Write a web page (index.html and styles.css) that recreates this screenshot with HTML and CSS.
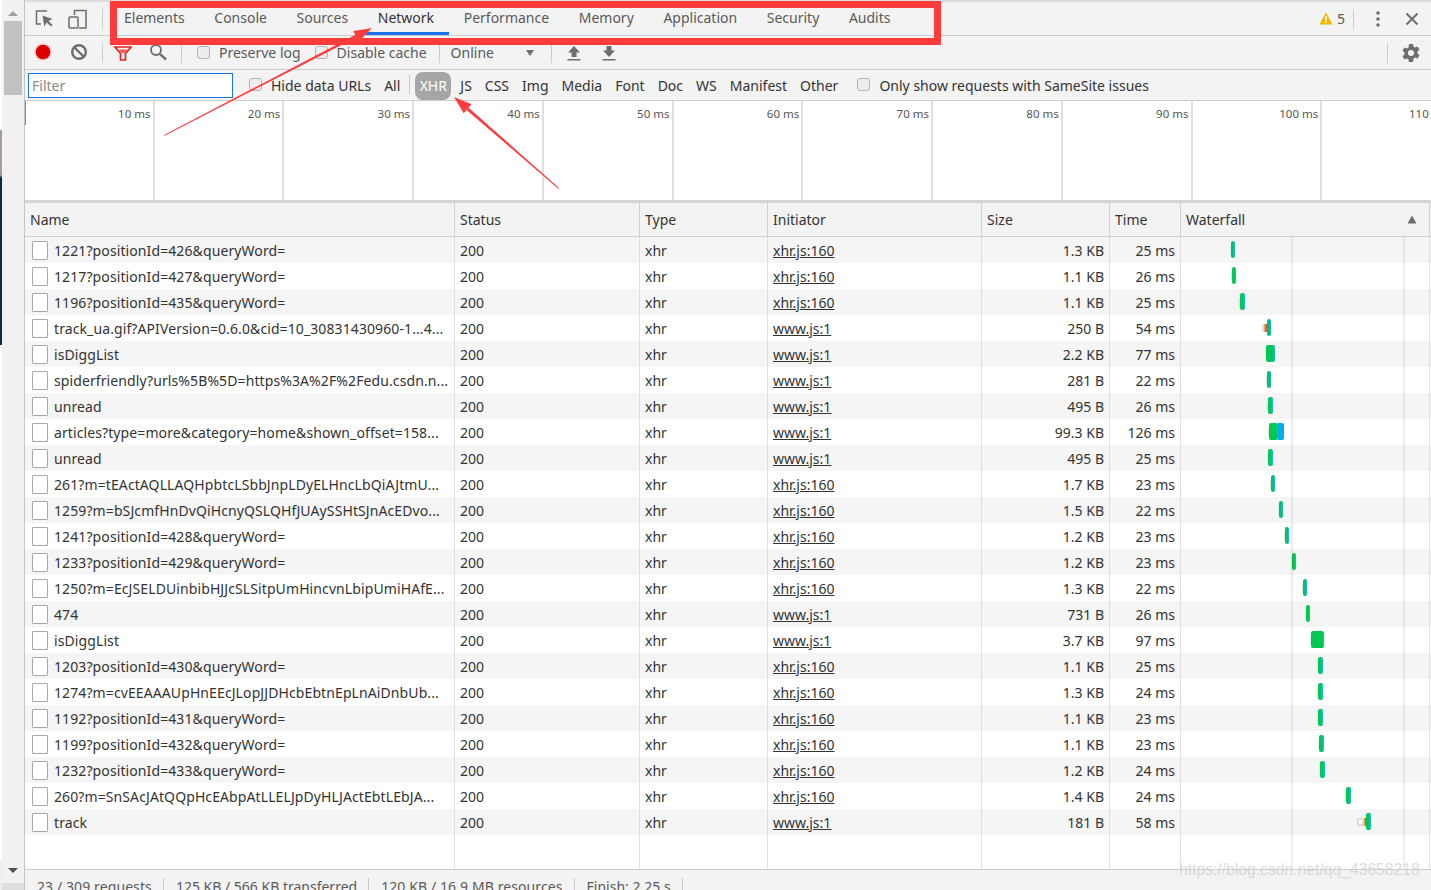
FILE: index.html
```html
<!DOCTYPE html>
<html lang="en">
<head>
<meta charset="utf-8">
<title>DevTools Network</title>
<link rel="stylesheet" href="styles.css">
</head>
<body>
<div class="app">
  <div class="edge"></div>
  <div class="scrollbar">
    <svg class="sb-arrow" width="12" height="8" viewBox="0 0 12 8"><path d="M1 7L6 2l5 5z" fill="#a0a0a0"/></svg>
    <div class="sb-thumb"></div>
    <div class="sb-spacer"></div>
    <svg class="sb-arrow down" width="12" height="8" viewBox="0 0 12 8"><path d="M1 1h10L6 6z" fill="#505050"/></svg>
    <div class="sb-foot"></div>
  </div>
  <div class="main">
    <div class="topline"></div>
    <div class="tabbar">
      <div class="tabicons">
        <svg width="22" height="22" viewBox="0 0 22 22" fill="none"><path d="M14 3H3.500V16H8" stroke="#6e6e6e" stroke-width="1.500"/><path d="M9.500 7.500l1.800 11 2.400-4 4.300 4 1.500-1.500-4-4 4-2z" fill="#6e6e6e"/></svg>
        <svg width="22" height="22" viewBox="0 0 22 22" fill="none"><path d="M7.500 7V2.500H19V20H12" stroke="#6e6e6e" stroke-width="1.500"/><rect x="2" y="9" width="9" height="11" rx="1" stroke="#6e6e6e" stroke-width="1.500"/></svg>
      </div>
      <div class="vsep tall"></div>
      <div class="tabs">
        <span class="tab">Elements</span>
        <span class="tab">Console</span>
        <span class="tab">Sources</span>
        <span class="tab active">Network</span>
        <span class="tab">Performance</span>
        <span class="tab">Memory</span>
        <span class="tab">Application</span>
        <span class="tab">Security</span>
        <span class="tab">Audits</span>
      </div>
      <div class="tabright">
        <svg width="14" height="13" viewBox="0 0 14 13"><path d="M7 0.500L13.600 12.500H0.400z" fill="#f4b400"/><rect x="6.200" y="4" width="1.600" height="4.500" fill="#fff"/><rect x="6.200" y="9.400" width="1.600" height="1.600" fill="#fff"/></svg>
        <span class="warncount">5</span>
        <div class="vsep warn-sep"></div>
        <svg class="more" width="6" height="18" viewBox="0 0 6 18"><circle cx="3" cy="3" r="1.800" fill="#6e6e6e"/><circle cx="3" cy="9" r="1.800" fill="#6e6e6e"/><circle cx="3" cy="15" r="1.800" fill="#6e6e6e"/></svg>
        <svg class="close" width="14" height="14" viewBox="0 0 14 14"><path d="M1.500 1.500l11 11M12.500 1.500l-11 11" stroke="#6e6e6e" stroke-width="2"/></svg>
      </div>
    </div>
    <div class="toolbar">
      <svg class="tool-record" width="18" height="18" viewBox="0 0 18 18"><circle cx="9" cy="9" r="9" fill="#f6d0d0"/><circle cx="9" cy="9" r="7.300" fill="#dd0000"/></svg>
      <svg class="tool-clear" width="18" height="18" viewBox="0 0 18 18" fill="none"><circle cx="9" cy="9" r="6.800" stroke="#6e6e6e" stroke-width="2.400"/><path d="M4.500 4.500l9 9" stroke="#6e6e6e" stroke-width="2.400"/></svg>
      <div class="vsep short"></div>
      <svg class="tool-filter" width="18" height="15" viewBox="0 0 18 15" fill="none"><path d="M1 1h16l-5.500 6.500V14h-5V7.500z" stroke="#e8201f" stroke-width="1.700"/><path d="M4.500 3.500h9L10.500 7h-3z" fill="#f25a5a"/></svg>
      <svg class="tool-search" width="18" height="18" viewBox="0 0 18 18" fill="none"><circle cx="7" cy="7" r="5" stroke="#6e6e6e" stroke-width="1.800"/><path d="M10.800 10.800L17 16.500" stroke="#6e6e6e" stroke-width="2.400"/></svg>
      <div class="vsep short"></div>
      <label class="check preserve"><span class="box"></span>Preserve log</label>
      <label class="check disable"><span class="box"></span>Disable cache</label>
      <div class="vsep short"></div>
      <span class="online">Online</span>
      <svg class="online-arrow" width="10" height="8" viewBox="0 0 10 8"><path d="M1 1h8L5 7z" fill="#6e6e6e"/></svg>
      <div class="vsep short"></div>
      <svg class="tool-up" width="14" height="16" viewBox="0 0 14 16"><path d="M7 1l6 6.500H9.500V12h-5V7.500H1z" fill="#6e6e6e"/><rect x="0.500" y="14" width="13" height="1.500" fill="#6e6e6e"/></svg>
      <svg class="tool-down" width="14" height="16" viewBox="0 0 14 16"><path d="M7 12L1 5.500h3.500V1h5v4.500H13z" fill="#6e6e6e"/><rect x="0.500" y="14" width="13" height="1.500" fill="#6e6e6e"/></svg>
      <div class="grow"></div>
      <div class="vsep short"></div>
      <svg class="tool-gear" width="20" height="20" viewBox="0 0 20 20"><path fill="#6e6e6e" fill-rule="evenodd" d="M8 1h4l.5 2.600 1.500.8 2.500-1 2 3.400-2 1.700v2l2 1.700-2 3.400-2.500-1-1.500.8L12 19H8l-.5-2.600-1.500-.8-2.500 1-2-3.400 2-1.700V9.500l-2-1.700 2-3.400 2.500 1 1.500-.8zM10 7a3 3 0 1 0 0 6 3 3 0 0 0 0-6z"/></svg>
    </div>
    <div class="filterbar">
      <div class="filterinput">Filter</div>
      <label class="check hide"><span class="box"></span>Hide data URLs</label>
      <span class="ftype all">All</span>
      <div class="vsep filter-sep"></div>
      <span class="ftype selected">XHR</span>
      <span class="ftype">JS</span>
      <span class="ftype">CSS</span>
      <span class="ftype">Img</span>
      <span class="ftype">Media</span>
      <span class="ftype">Font</span>
      <span class="ftype">Doc</span>
      <span class="ftype">WS</span>
      <span class="ftype">Manifest</span>
      <span class="ftype">Other</span>
      <label class="check samesite"><span class="box"></span>Only show requests with SameSite issues</label>
    </div>
    <div class="overview">
      <div class="tick">10 ms</div>
      <div class="tick">20 ms</div>
      <div class="tick">30 ms</div>
      <div class="tick">40 ms</div>
      <div class="tick">50 ms</div>
      <div class="tick">60 ms</div>
      <div class="tick">70 ms</div>
      <div class="tick">80 ms</div>
      <div class="tick">90 ms</div>
      <div class="tick">100 ms</div>
      <div class="tick">110 ms</div>
    </div>
    <div class="thead row-grid">
      <div class="th">Name</div>
      <div class="th">Status</div>
      <div class="th">Type</div>
      <div class="th">Initiator</div>
      <div class="th">Size</div>
      <div class="th">Time</div>
      <div class="th wf-head">Waterfall<svg width="10" height="9" viewBox="0 0 10 9"><path d="M5 0.500L9.500 8.500H0.500z" fill="#6e6e6e"/></svg></div>
    </div>
    <div class="tbody">
      <div class="row row-grid"><div class="td name"><span class="file"></span><span class="fname">1221?positionId=426&amp;queryWord=</span></div><div class="td">200</div><div class="td">xhr</div><div class="td"><a class="link">xhr.js:160</a></div><div class="td num">1.3 KB</div><div class="td num">25 ms</div><div class="td wf"><span class="wait" style="margin-left:49px;width:1px"></span><span class="recv" style="width:4px"></span></div></div>
      <div class="row row-grid"><div class="td name"><span class="file"></span><span class="fname">1217?positionId=427&amp;queryWord=</span></div><div class="td">200</div><div class="td">xhr</div><div class="td"><a class="link">xhr.js:160</a></div><div class="td num">1.1 KB</div><div class="td num">26 ms</div><div class="td wf"><span class="wait" style="margin-left:50px;width:1px"></span><span class="recv" style="width:4px"></span></div></div>
      <div class="row row-grid"><div class="td name"><span class="file"></span><span class="fname">1196?positionId=435&amp;queryWord=</span></div><div class="td">200</div><div class="td">xhr</div><div class="td"><a class="link">xhr.js:160</a></div><div class="td num">1.1 KB</div><div class="td num">25 ms</div><div class="td wf"><span class="wait" style="margin-left:57px;width:2px"></span><span class="recv" style="width:5px"></span></div></div>
      <div class="row row-grid"><div class="td name"><span class="file"></span><span class="fname">track_ua.gif?APIVersion=0.6.0&amp;cid=10_30831430960-1...4...</span></div><div class="td">200</div><div class="td">xhr</div><div class="td"><a class="link">www.js:1</a></div><div class="td num">250 B</div><div class="td num">54 ms</div><div class="td wf"><span class="wait" style="margin-left:81px;width:2px"></span><span class="stall" style="width:3px"></span><span class="recv" style="width:4px"></span></div></div>
      <div class="row row-grid"><div class="td name"><span class="file"></span><span class="fname">isDiggList</span></div><div class="td">200</div><div class="td">xhr</div><div class="td"><a class="link">www.js:1</a></div><div class="td num">2.2 KB</div><div class="td num">77 ms</div><div class="td wf"><span class="wait" style="margin-left:84px;width:1px"></span><span class="recv wide" style="width:9px"></span></div></div>
      <div class="row row-grid"><div class="td name"><span class="file"></span><span class="fname">spiderfriendly?urls%5B%5D=https%3A%2F%2Fedu.csdn.n...</span></div><div class="td">200</div><div class="td">xhr</div><div class="td"><a class="link">www.js:1</a></div><div class="td num">281 B</div><div class="td num">22 ms</div><div class="td wf"><span class="wait" style="margin-left:85px;width:1px"></span><span class="recv" style="width:4px"></span></div></div>
      <div class="row row-grid"><div class="td name"><span class="file"></span><span class="fname">unread</span></div><div class="td">200</div><div class="td">xhr</div><div class="td"><a class="link">www.js:1</a></div><div class="td num">495 B</div><div class="td num">26 ms</div><div class="td wf"><span class="wait" style="margin-left:85px;width:2px"></span><span class="recv" style="width:5px"></span></div></div>
      <div class="row row-grid"><div class="td name"><span class="file"></span><span class="fname">articles?type=more&amp;category=home&amp;shown_offset=158...</span></div><div class="td">200</div><div class="td">xhr</div><div class="td"><a class="link">www.js:1</a></div><div class="td num">99.3 KB</div><div class="td num">126 ms</div><div class="td wf"><span class="wait" style="margin-left:87px;width:1px"></span><span class="recv wide" style="width:9px"></span><span class="dl" style="width:6px"></span></div></div>
      <div class="row row-grid"><div class="td name"><span class="file"></span><span class="fname">unread</span></div><div class="td">200</div><div class="td">xhr</div><div class="td"><a class="link">www.js:1</a></div><div class="td num">495 B</div><div class="td num">25 ms</div><div class="td wf"><span class="wait" style="margin-left:86px;width:1px"></span><span class="recv" style="width:5px"></span></div></div>
      <div class="row row-grid"><div class="td name"><span class="file"></span><span class="fname">261?m=tEActAQLLAQHpbtcLSbbJnpLDyELHncLbQiAJtmU...</span></div><div class="td">200</div><div class="td">xhr</div><div class="td"><a class="link">xhr.js:160</a></div><div class="td num">1.7 KB</div><div class="td num">23 ms</div><div class="td wf"><span class="wait" style="margin-left:89px;width:1px"></span><span class="recv" style="width:4px"></span></div></div>
      <div class="row row-grid"><div class="td name"><span class="file"></span><span class="fname">1259?m=bSJcmfHnDvQiHcnyQSLQHfJUAySSHtSJnAcEDvo...</span></div><div class="td">200</div><div class="td">xhr</div><div class="td"><a class="link">xhr.js:160</a></div><div class="td num">1.5 KB</div><div class="td num">22 ms</div><div class="td wf"><span class="wait" style="margin-left:97px;width:1px"></span><span class="recv" style="width:4px"></span></div></div>
      <div class="row row-grid"><div class="td name"><span class="file"></span><span class="fname">1241?positionId=428&amp;queryWord=</span></div><div class="td">200</div><div class="td">xhr</div><div class="td"><a class="link">xhr.js:160</a></div><div class="td num">1.2 KB</div><div class="td num">23 ms</div><div class="td wf"><span class="wait" style="margin-left:103px;width:1px"></span><span class="recv" style="width:4px"></span></div></div>
      <div class="row row-grid"><div class="td name"><span class="file"></span><span class="fname">1233?positionId=429&amp;queryWord=</span></div><div class="td">200</div><div class="td">xhr</div><div class="td"><a class="link">xhr.js:160</a></div><div class="td num">1.2 KB</div><div class="td num">23 ms</div><div class="td wf"><span class="wait" style="margin-left:110px;width:1px"></span><span class="recv" style="width:4px"></span></div></div>
      <div class="row row-grid"><div class="td name"><span class="file"></span><span class="fname">1250?m=EcJSELDUinbibHJJcSLSitpUmHincvnLbipUmiHAfE...</span></div><div class="td">200</div><div class="td">xhr</div><div class="td"><a class="link">xhr.js:160</a></div><div class="td num">1.3 KB</div><div class="td num">22 ms</div><div class="td wf"><span class="wait" style="margin-left:121px;width:1px"></span><span class="recv" style="width:4px"></span></div></div>
      <div class="row row-grid"><div class="td name"><span class="file"></span><span class="fname">474</span></div><div class="td">200</div><div class="td">xhr</div><div class="td"><a class="link">www.js:1</a></div><div class="td num">731 B</div><div class="td num">26 ms</div><div class="td wf"><span class="wait" style="margin-left:124px;width:1px"></span><span class="recv" style="width:4px"></span></div></div>
      <div class="row row-grid"><div class="td name"><span class="file"></span><span class="fname">isDiggList</span></div><div class="td">200</div><div class="td">xhr</div><div class="td"><a class="link">www.js:1</a></div><div class="td num">3.7 KB</div><div class="td num">97 ms</div><div class="td wf"><span class="wait" style="margin-left:129px;width:1px"></span><span class="recv wide" style="width:13px"></span></div></div>
      <div class="row row-grid"><div class="td name"><span class="file"></span><span class="fname">1203?positionId=430&amp;queryWord=</span></div><div class="td">200</div><div class="td">xhr</div><div class="td"><a class="link">xhr.js:160</a></div><div class="td num">1.1 KB</div><div class="td num">25 ms</div><div class="td wf"><span class="wait" style="margin-left:136px;width:1px"></span><span class="recv" style="width:5px"></span></div></div>
      <div class="row row-grid"><div class="td name"><span class="file"></span><span class="fname">1274?m=cvEEAAAUpHnEEcJLopJJDHcbEbtnEpLnAiDnbUb...</span></div><div class="td">200</div><div class="td">xhr</div><div class="td"><a class="link">xhr.js:160</a></div><div class="td num">1.3 KB</div><div class="td num">24 ms</div><div class="td wf"><span class="wait" style="margin-left:136px;width:1px"></span><span class="recv" style="width:5px"></span></div></div>
      <div class="row row-grid"><div class="td name"><span class="file"></span><span class="fname">1192?positionId=431&amp;queryWord=</span></div><div class="td">200</div><div class="td">xhr</div><div class="td"><a class="link">xhr.js:160</a></div><div class="td num">1.1 KB</div><div class="td num">23 ms</div><div class="td wf"><span class="wait" style="margin-left:136px;width:1px"></span><span class="recv" style="width:5px"></span></div></div>
      <div class="row row-grid"><div class="td name"><span class="file"></span><span class="fname">1199?positionId=432&amp;queryWord=</span></div><div class="td">200</div><div class="td">xhr</div><div class="td"><a class="link">xhr.js:160</a></div><div class="td num">1.1 KB</div><div class="td num">23 ms</div><div class="td wf"><span class="wait" style="margin-left:137px;width:1px"></span><span class="recv" style="width:5px"></span></div></div>
      <div class="row row-grid"><div class="td name"><span class="file"></span><span class="fname">1232?positionId=433&amp;queryWord=</span></div><div class="td">200</div><div class="td">xhr</div><div class="td"><a class="link">xhr.js:160</a></div><div class="td num">1.2 KB</div><div class="td num">24 ms</div><div class="td wf"><span class="wait" style="margin-left:138px;width:1px"></span><span class="recv" style="width:5px"></span></div></div>
      <div class="row row-grid"><div class="td name"><span class="file"></span><span class="fname">260?m=SnSAcJAtQQpHcEAbpAtLLELJpDyHLJActEbtLEbJA...</span></div><div class="td">200</div><div class="td">xhr</div><div class="td"><a class="link">xhr.js:160</a></div><div class="td num">1.4 KB</div><div class="td num">24 ms</div><div class="td wf"><span class="wait" style="margin-left:164px;width:1px"></span><span class="recv" style="width:5px"></span></div></div>
      <div class="row row-grid"><div class="td name"><span class="file"></span><span class="fname">track</span></div><div class="td">200</div><div class="td">xhr</div><div class="td"><a class="link">www.js:1</a></div><div class="td num">181 B</div><div class="td num">58 ms</div><div class="td wf"><span class="queue" style="margin-left:176px;width:7px"></span><span class="stall" style="width:2px"></span><span class="recv" style="width:5px"></span></div></div>
      <div class="row-fill row-grid"><div class="td"></div><div class="td"></div><div class="td"></div><div class="td"></div><div class="td"></div><div class="td"></div><div class="td wf"></div></div>
      <div class="wf-line first"></div>
      <div class="wf-line second"></div>
    </div>
    <div class="statusbar">
      <span class="stat">23 / 309 requests</span>
      <span class="stat">125 KB / 566 KB transferred</span>
      <span class="stat">120 KB / 16.9 MB resources</span>
      <span class="stat last">Finish: 2.25 s</span>
    </div>
  </div>
</div>
<svg class="annot" width="1431" height="890" viewBox="0 0 1431 890" fill="none">
  <rect x="113.500" y="4.500" width="824" height="37" stroke="#ff3b3b" stroke-width="7"/>
  <path d="M164 135L164.500 135.800 358.600 36.200 357.400 33.800z" fill="#ff3b3b"/>
  <path d="M372 28L353.300 30.900 358.700 41.500z" fill="#ff3b3b"/>
  <path d="M559 188L558.300 188.700 466.600 109.900 468.600 107.700z" fill="#ff3b3b"/>
  <path d="M454 97L471.500 104.300 463.700 113.300z" fill="#ff3b3b"/>
</svg>
<div class="watermark">https://blog.csdn.net/qq_43658218</div>
</body>
</html>
```
FILE: styles.css
```css
* { box-sizing: border-box; }
html, body { margin: 0; padding: 0; height: 100%; overflow: hidden; }
body { font-family: "Noto Sans", "Open Sans", "Liberation Sans", sans-serif; font-size: 14px; color: #333; background: #fff; position: relative; }
.app { display: flex; width: 1431px; height: 890px; }
.edge { flex: 0 0 2px; background: linear-gradient(to bottom, #fff 0 130px, #a89c94 130px 175px, #0b2a45 178px 345px, #fff 345px 860px, #eee 860px); }
.scrollbar { flex: 0 0 22px; background: #f1f1f1; display: flex; flex-direction: column; align-items: center; }
.sb-arrow { flex: none; margin: 9px 0 2px; }
.sb-arrow.down { margin: 0 0 8px; }
.sb-thumb { width: 18px; flex: 0 0 74px; background: #c1c1c1; margin-top: 2px; }
.sb-spacer { flex: 1; }
.sb-foot { flex: 0 0 7px; width: 100%; background: #dedede; }
.main { flex: 1; min-width: 0; display: flex; flex-direction: column; border-left: 1px solid #c4c4c4; }
.topline { flex: 0 0 2px; background: #dcdce0; }
.tabbar { flex: 0 0 34px; display: flex; align-items: center; background: #f3f3f3; border-bottom: 1px solid #ccc; }
.tabicons { display: flex; gap: 12px; padding-left: 8px; width: 77px; flex: none; }
.vsep { width: 1px; background: #ccc; flex: none; }
.vsep.tall { height: 20px; }
.vsep.short { height: 20px; }
.tabs { display: flex; height: 33px; margin-left: 6.200px; }
.tab { padding: 0 14.800px; line-height: 32px; color: #5a5a5a; white-space: nowrap; }
.tab.active { color: #333; border-bottom: 3px solid #1a73e8; }
.tabright { margin-left: auto; display: flex; align-items: center; padding-right: 12px; }
.warncount { color: #5a5a5a; margin-left: 4px; }
.warn-sep { height: 20px; margin-left: 8px; }
.more { margin-left: 21px; }
.close { margin-left: 24px; }
.toolbar { flex: 0 0 34px; display: flex; align-items: center; background: #f3f3f3; border-bottom: 1px solid #ccc; color: #5a5a5a; }
.tool-record { margin: 0 0 2px 9px; }
.tool-clear { margin: 0 0 1px 18px; }
.tool-clear + .vsep { margin-left: 14px; }
.tool-filter { margin: 1px 0 0 11px; }
.tool-search { margin: 0 0 1px 17px; }
.tool-search + .vsep { margin-left: 14px; }
.check { display: flex; align-items: center; white-space: nowrap; }
.box { width: 13px; height: 13px; border: 1px solid #b4b4b4; border-radius: 3px; background: #ededed; flex: none; margin-bottom: 1px; }
.preserve { margin-left: 15px; gap: 9px; }
.disable { margin-left: 14px; gap: 9px; }
.disable + .vsep { margin-left: 12px; }
.online { margin-left: 11px; }
.online-arrow { margin-left: 31px; }
.online-arrow + .vsep { margin-left: 16px; }
.tool-up { margin-left: 15px; }
.tool-down { margin-left: 21px; }
.grow { flex: 1; }
.grow + .vsep { margin-right: 13px; }
.tool-gear { margin-right: 10px; }
.filterbar { flex: 0 0 31px; display: flex; align-items: center; background: #f3f3f3; border-bottom: 1px solid #ccc; }
.filterinput { margin-left: 3px; width: 205px; height: 25px; background: #fff; border: 1px solid #1a73e8; color: #8a8a8a; padding-left: 3px; line-height: 23px; flex: none; }
.hide { margin-left: 16px; gap: 9px; }
.ftype { padding: 0 3px; margin-left: 7px; white-space: nowrap; }
.ftype.all { margin-left: 10px; }
.filter-sep { height: 20px; margin-left: 6px; }
.ftype.selected { background: #a6a6a6; color: #fff; border-radius: 8px; height: 28px; width: 36px; padding: 0; text-align: center; line-height: 28px; margin: 2px 0 0 5px; }
.selected + .ftype { margin-left: 6px; }
.samesite { margin-left: 16px; gap: 9px; }
.overview { flex: 0 0 102px; display: flex; overflow: hidden; background: #fff; border-bottom: 3px solid #d4d4d4; position: relative; }
.overview::before { content: ""; position: absolute; left: 0; top: 0; width: 1px; height: 24px; background: #888; }
.tick { flex: 0 0 129.750px; border-right: 2px solid #e0e0e0; text-align: right; font-size: 11.500px; color: #555; padding: 5px 2px 0 0; white-space: nowrap; }
.tick:first-child { flex-basis: 129.500px; }
.row-grid { display: grid; grid-template-columns: 430px 185px 128px 214px 128px 71px 249px; }
.thead { flex: 0 0 33px; background: #f3f3f3; border-bottom: 1px solid #d0d0d0; }
.th { border-right: 1px solid #d0d0d0; padding-left: 5px; line-height: 33px; color: #333; }
.wf-head { display: flex; justify-content: space-between; align-items: center; padding-right: 12px; }
.tbody { flex: 1; min-height: 0; position: relative; display: flex; flex-direction: column; }
.row { flex: 0 0 26px; grid-template-rows: 26px; }
.row:nth-child(odd) { background: #f5f5f5; }
.row-fill { flex: 1; }
.td { border-right: 1px solid #e0e0e0; padding: 1px 5px 0; line-height: 26px; white-space: nowrap; overflow: hidden; min-width: 0; }
.name { display: flex; align-items: center; gap: 6px; padding: 1px 5px 0 7px; }
.file { width: 16px; height: 19px; background: #fff; border: 1px solid #a8a8a8; border-radius: 1px; flex: none; }
.fname { overflow: hidden; letter-spacing: .1px; }
.num { text-align: right; }
.link { color: #333; text-decoration: underline; }
.wf { display: flex; align-items: center; padding: 0 0 1px; overflow: hidden; }
.wf span { display: block; flex: none; }
.wait { height: 8px; background: #e2e2e2; }
.queue { height: 8px; background: #fff; border: 2px solid #ddd; }
.stall { height: 8px; background: linear-gradient(to right, #f5b26a, #e0703a 60%, #a6476a); }
.recv { height: 17px; background: linear-gradient(to right, #00c853 0 68%, #1ab2ee 72%); border-radius: 2px; }
.recv.wide { background: linear-gradient(to right, #00c853 0 90%, #1ab2ee 92%); }
.dl { height: 17px; background: #03a9f4; border-radius: 0 2px 2px 0; }
.wf-line { position: absolute; top: 0; bottom: 0; width: 2px; background: rgba(0,0,0,.07); }
.wf-line.first { left: 1266px; }
.wf-line.second { left: 1378px; }
.statusbar { flex: 0 0 21px; background: #f3f3f3; border-top: 1px solid #ccc; display: flex; align-items: flex-start; overflow: hidden; color: #5a5a5a; padding-top: 8px; }
.stat { padding: 0 11px 0 12px; border-right: 1px solid #ccc; line-height: 17px; white-space: nowrap; }
.stat:nth-child(odd) { letter-spacing: .1px; }
.annot { position: absolute; left: 0; top: 0; pointer-events: none; }
.watermark { position: absolute; left: 1179px; top: 861px; font-family: "Liberation Sans", sans-serif; font-size: 15.700px; color: rgba(200,200,200,.65); white-space: nowrap; }
```
